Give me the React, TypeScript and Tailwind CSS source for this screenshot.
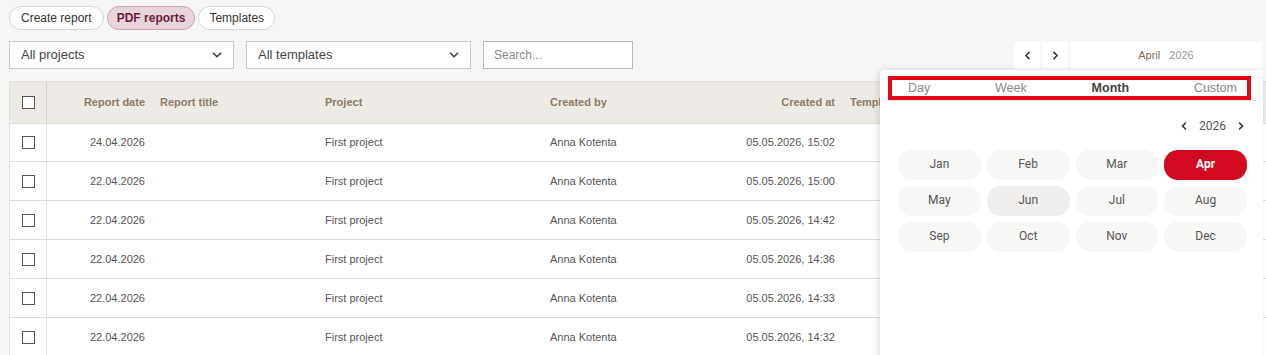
import { ChevronDown, ChevronLeft, ChevronRight } from 'lucide-react'

const ROWS = [
  { date: '24.04.2026', at: '05.05.2026, 15:02' },
  { date: '22.04.2026', at: '05.05.2026, 15:00' },
  { date: '22.04.2026', at: '05.05.2026, 14:42' },
  { date: '22.04.2026', at: '05.05.2026, 14:36' },
  { date: '22.04.2026', at: '05.05.2026, 14:33' },
  { date: '22.04.2026', at: '05.05.2026, 14:32' },
]

const MONTHS = ['Jan', 'Feb', 'Mar', 'Apr', 'May', 'Jun', 'Jul', 'Aug', 'Sep', 'Oct', 'Nov', 'Dec']

const COLS = 'grid grid-cols-[37px_105px_165px_225px_158px_142px_1fr]'

function Box() {
  return <span className="block w-[13px] h-[13px] border-[1.5px] border-[#555] bg-white" />
}

function Select({ label }: { label: string }) {
  return (
    <div className="flex items-center justify-between w-[225px] h-[28px] pl-[11px] pr-[9px] bg-white border border-[#c8c8c8] text-[13px] text-[#444]">
      <span>{label}</span>
      <ChevronDown size={14} strokeWidth={3} className="text-[#444]" />
    </div>
  )
}

export default function App() {
  return (
    <div className="relative w-[1266px] h-[355px] overflow-hidden bg-[#f6f6f5] font-['Liberation_Sans',Arial,sans-serif]">

      {/* Tabs */}
      <div className="flex gap-[3px] pl-[9px] pt-[6px]">
        <span className="h-[24px] px-[11px] flex items-center rounded-full border border-[#d6d6d6] bg-white text-[12px] text-[#333]">Create report</span>
        <span className="h-[24px] px-[9px] flex items-center rounded-full border border-[#c9a3b0] bg-[#e8d5db] text-[12px] font-bold text-[#6b1d40]">PDF reports</span>
        <span className="h-[24px] px-[10px] flex items-center rounded-full border border-[#d6d6d6] bg-white text-[12px] text-[#333]">Templates</span>
      </div>

      {/* Filters */}
      <div className="flex items-center pl-[9px] pr-[4px] mt-[11px] h-[28px]">
        <Select label="All projects" />
        <div className="ml-[12px]"><Select label="All templates" /></div>
        <div className="ml-[12px] w-[150px] h-[28px] flex items-center pl-[10px] bg-white border border-[#b8b8b8] text-[12px] text-[#8a8a8a]">Search...</div>
        <div className="ml-auto flex gap-[2px] h-[27px]">
          <span className="w-[26px] flex items-center justify-center bg-white"><ChevronLeft size={13} strokeWidth={3} className="text-[#333]" /></span>
          <span className="w-[26px] flex items-center justify-center bg-white"><ChevronRight size={13} strokeWidth={3} className="text-[#333]" /></span>
          <span className="w-[192px] flex items-center justify-center gap-[9px] bg-white text-[11px]">
            <span className="text-[#7d6a58]">April</span>
            <span className="text-[#999]">2026</span>
          </span>
        </div>
      </div>

      {/* Table */}
      <div className="ml-[9px] mt-[12px] border-l border-t border-[#e2e2e2] bg-white">
        <div className={`${COLS} h-[42px] items-center bg-[#eeebe6] text-[11px] font-bold text-[#8c7a66] border-b border-[#dedede]`}>
          <div className="h-full flex items-center justify-center border-r border-[#d5d2cc]"><Box /></div>
          <div className="text-right pr-[7px]">Report date</div>
          <div className="pl-[8px]">Report title</div>
          <div className="pl-[8px]">Project</div>
          <div className="pl-[8px]">Created by</div>
          <div className="text-right pr-[7px]">Created at</div>
          <div className="pl-[8px]">Template</div>
        </div>
        {ROWS.map((r, i) => (
          <div key={i} className={`${COLS} ${i === 0 ? 'h-[38px]' : 'h-[39px]'} items-center text-[11px] text-[#555] border-b border-[#dedede]`}>
            <div className="h-full flex items-center justify-center border-r border-[#e0e0e0]"><Box /></div>
            <div className="text-right pr-[7px]">{r.date}</div>
            <div />
            <div className="pl-[8px]">First project</div>
            <div className="pl-[8px]">Anna Kotenta</div>
            <div className="text-right pr-[7px]">{r.at}</div>
            <div />
          </div>
        ))}
      </div>

      {/* Period popup */}
      <div className="absolute left-[880px] top-[70px] w-[383px] h-[300px] bg-white rounded-tl-[4px] shadow-[-2px_0_6px_rgba(0,0,0,0.12)]">
        <div className="mx-[4px] mt-[6px] border-b border-[#e6e6e6]">
          <div className="ml-[4px] mr-[8px] h-[24px] border-[4px] border-[#e30613] flex items-center justify-between pl-[16px] pr-[10px] text-[12.5px] text-[#888]">
            <span>Day</span>
            <span>Week</span>
            <span className="font-bold text-[#444]">Month</span>
            <span>Custom</span>
          </div>
        </div>
        <div className="flex items-center justify-end gap-[9px] pr-[16px] mt-[17px] h-[16px] font-['Roboto',sans-serif] text-[12px] text-[#555]">
          <ChevronLeft size={12} strokeWidth={3.2} className="text-[#333]" />
          <span>2026</span>
          <ChevronRight size={12} strokeWidth={3.2} className="text-[#333]" />
        </div>
        <div className="grid grid-cols-4 gap-[6px] pl-[18px] pr-[16px] mt-[16px] font-['Roboto',sans-serif] text-[12px]">
          {MONTHS.map(m => (
            <div
              key={m}
              className={`h-[30px] pb-[2px] rounded-[14px] flex items-center justify-center ${
                m === 'Apr'
                  ? 'bg-[#d20a20] text-white font-bold'
                  : m === 'Jun'
                  ? 'bg-[#f0efee] text-[#555]'
                  : 'bg-[#f7f7f6] text-[#555]'
              }`}
            >
              {m}
            </div>
          ))}
        </div>
      </div>
    </div>
  )
}
